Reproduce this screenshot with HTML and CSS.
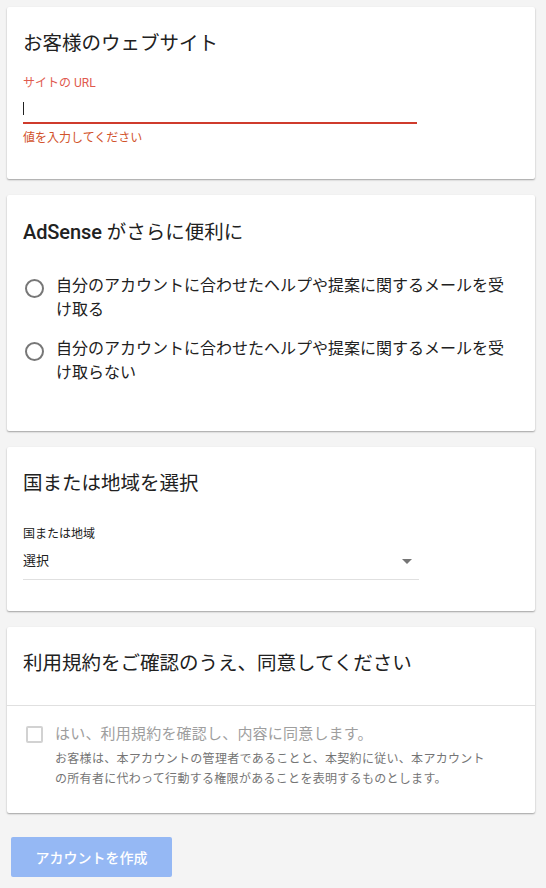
FILE: index.html
```html
<!DOCTYPE html>
<html lang="ja">
<head>
<meta charset="utf-8">
<title>AdSense</title>
<link rel="stylesheet" href="styles.css">
</head>
<body>
<main class="page">
  <section class="card card-site">
    <h2 class="card-title">お客様のウェブサイト</h2>
    <label class="field-label field-label-error">サイトの URL</label>
    <div class="text-input">
      <span class="caret"></span>
    </div>
    <div class="error-text">値を入力してください</div>
  </section>

  <section class="card card-email">
    <h2 class="card-title"><span class="brand">AdSense</span> がさらに便利に</h2>
    <div class="radio-list">
      <div class="radio-option">
        <span class="radio"></span>
        <span class="radio-text">自分のアカウントに合わせたヘルプや提案に関するメールを受け取る</span>
      </div>
      <div class="radio-option">
        <span class="radio"></span>
        <span class="radio-text">自分のアカウントに合わせたヘルプや提案に関するメールを受け取らない</span>
      </div>
    </div>
  </section>

  <section class="card card-country">
    <h2 class="card-title">国または地域を選択</h2>
    <div class="field-label field-label-plain">国または地域</div>
    <div class="select">
      <span class="select-value">選択</span>
      <span class="select-arrow"></span>
    </div>
  </section>

  <section class="card card-terms">
    <div class="terms-head">
      <h2 class="card-title">利用規約をご確認のうえ、同意してください</h2>
    </div>
    <div class="terms-body">
      <span class="checkbox"></span>
      <div class="terms-text">
        <div class="terms-main">はい、利用規約を確認し、内容に同意します。</div>
        <div class="terms-sub">お客様は、本アカウントの管理者であることと、本契約に従い、本アカウントの所有者に代わって行動する権限があることを表明するものとします。</div>
      </div>
    </div>
  </section>

  <div class="actions">
    <button class="btn-create" disabled>アカウントを作成</button>
  </div>
</main>
</body>
</html>
```
FILE: styles.css
```css
html, body {
  margin: 0;
  padding: 0;
}

body {
  background: #f4f4f4;
  font-family: Roboto, "Noto Sans CJK JP", sans-serif;
  color: #212121;
}

.page {
  display: flex;
  flex-direction: column;
  gap: 16px;
  padding: 7px 11px 0 7px;
}

.card {
  background: #fff;
  border-radius: 2px;
  box-shadow: 0 1px 2px rgba(0, 0, 0, 0.28), 0 1px 1px rgba(0, 0, 0, 0.08);
  padding: 23px 16px 0 16px;
  display: flex;
  flex-direction: column;
  align-items: flex-start;
}

.card-title {
  margin: 0;
  font-size: 19.5px;
  line-height: 28px;
  font-weight: 400;
  color: #212121;
}

.brand {
  font-family: Roboto, sans-serif;
  font-weight: 500;
  font-size: 20px;
  letter-spacing: -0.1px;
}

/* Card 1 */
.card-site {
  padding-bottom: 33px;
}

.field-label {
  font-size: 12px;
  line-height: 16px;
}

.field-label-error {
  margin-top: 17px;
  color: #df5a4e;
}

.text-input {
  width: 394px;
  height: 31px;
  display: flex;
  align-items: flex-end;
  border-bottom: 2px solid #cf3b2c;
}

.caret {
  width: 1px;
  height: 13px;
  background: #212121;
  margin-bottom: 7px;
}

.error-text {
  margin-top: 6px;
  font-size: 12px;
  line-height: 16px;
  color: #d2532b;
}

/* Card 2 */
.card-email {
  padding-bottom: 46px;
}

.radio-list {
  margin-top: 27px;
  display: flex;
  flex-direction: column;
  gap: 15px;
}

.radio-option {
  display: flex;
  align-items: flex-start;
}

.radio {
  flex: none;
  box-sizing: border-box;
  width: 19px;
  height: 19px;
  border: 2px solid #777;
  border-radius: 50%;
  margin: 5px 12px 0 2px;
}

.radio-text {
  width: 452px;
  font-size: 16px;
  line-height: 24px;
  color: #212121;
}

/* Card 3 */
.card-country {
  padding-bottom: 31px;
}

.field-label-plain {
  margin-top: 28px;
  color: #212121;
}

.select {
  margin-top: 9px;
  width: 396px;
  display: flex;
  align-items: center;
  justify-content: space-between;
  padding-bottom: 8px;
  border-bottom: 1px solid #e0e0e0;
}

.select-value {
  font-size: 13px;
  line-height: 20px;
  color: #212121;
}

.select-arrow {
  width: 0;
  height: 0;
  border-left: 5px solid transparent;
  border-right: 5px solid transparent;
  border-top: 5px solid #757575;
  margin-right: 7px;
}

/* Card 4 */
.card-terms {
  padding: 0;
  align-items: stretch;
}

.terms-head {
  padding: 23px 16px 27px 16px;
  border-bottom: 1px solid #e0e0e0;
}

.terms-body {
  display: flex;
  align-items: flex-start;
  padding: 17px 16px 24px 19px;
}

.checkbox {
  flex: none;
  box-sizing: border-box;
  width: 17px;
  height: 17px;
  border: 2px solid #d2d2d2;
  border-radius: 2px;
  margin: 3px 12px 0 0;
}

.terms-text {
  display: flex;
  flex-direction: column;
  gap: 4px;
}

.terms-main {
  font-size: 15px;
  letter-spacing: 0.2px;
  line-height: 22px;
  color: #9e9e9e;
}

.terms-sub {
  width: 440px;
  font-size: 12px;
  letter-spacing: 0.3px;
  line-height: 20px;
  color: #757575;
}

/* Button */
.actions {
  padding: 8px 0 0 4px;
}

.btn-create {
  width: 161px;
  height: 40px;
  border: none;
  border-radius: 2px;
  background: #95b8f4;
  color: #fff;
  font-family: Roboto, "Noto Sans CJK JP", sans-serif;
  font-size: 14px;
  font-weight: 500;
  padding: 0;
}
```
